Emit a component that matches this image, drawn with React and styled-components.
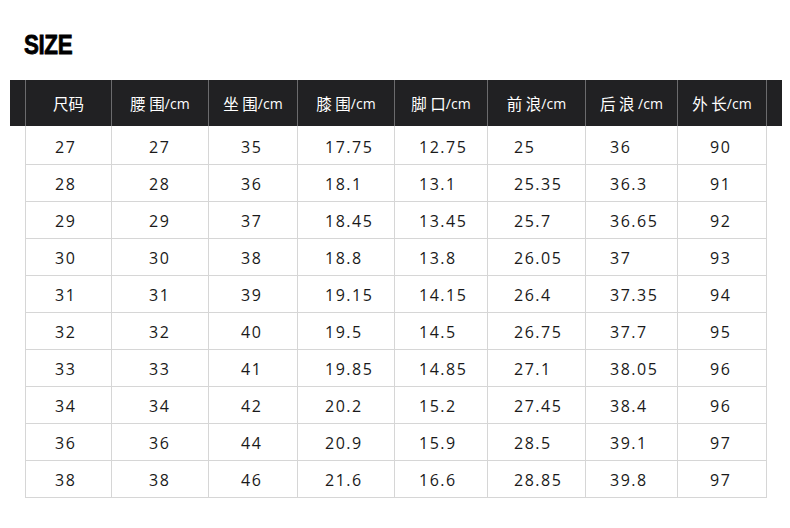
import styled, { createGlobalStyle } from "styled-components"

const GlobalStyle = createGlobalStyle`
  html, body {
    margin: 0;
    padding: 0;
    background: #ffffff;
  }
`

const COLS = "86px 97px 89px 97px 93px 98px 92px 89px"
const PADS = [29, 37, 32, 27, 24, 26, 24, 32]

const HEADERS = [
  ["尺码", ""],
  ["腰 围", "/cm"],
  ["坐 围", "/cm"],
  ["膝 围", "/cm"],
  ["脚 口", "/cm"],
  ["前 浪", "/cm"],
  ["后 浪 ", "/cm"],
  ["外 长", "/cm"],
]

const ROWS = [
  ["27", "27", "35", "17.75", "12.75", "25", "36", "90"],
  ["28", "28", "36", "18.1", "13.1", "25.35", "36.3", "91"],
  ["29", "29", "37", "18.45", "13.45", "25.7", "36.65", "92"],
  ["30", "30", "38", "18.8", "13.8", "26.05", "37", "93"],
  ["31", "31", "39", "19.15", "14.15", "26.4", "37.35", "94"],
  ["32", "32", "40", "19.5", "14.5", "26.75", "37.7", "95"],
  ["33", "33", "41", "19.85", "14.85", "27.1", "38.05", "96"],
  ["34", "34", "42", "20.2", "15.2", "27.45", "38.4", "96"],
  ["36", "36", "44", "20.9", "15.9", "28.5", "39.1", "97"],
  ["38", "38", "46", "21.6", "16.6", "28.85", "39.8", "97"],
]

const Page = styled.div`
  width: 790px;
  height: 528px;
  padding-top: 31px;
  box-sizing: border-box;
  overflow: hidden;
`

const Title = styled.h2`
  margin: 0 0 21px 24px;
  height: 28px;
  font-family: "Liberation Sans", Arial, sans-serif;
  font-weight: 700;
  font-size: 28px;
  line-height: 28px;
  letter-spacing: -0.5px;
  color: #000;
  -webkit-text-stroke: 0.8px #000;
  transform: scaleX(0.8);
  transform-origin: left center;
`

const Table = styled.div`
  margin-left: 10px;
  width: 772px;
`

const HeadRow = styled.div`
  display: grid;
  grid-template-columns: 15px ${COLS} 16px;
  height: 46px;
  background: #212123;
`

const HeadCell = styled.div`
  display: flex;
  align-items: center;
  justify-content: center;
  border-left: ${(p) => (p.$edge ? "none" : "1px solid #6b6b6d")};
  color: #fff;
  font-family: "Noto Sans CJK SC", "Open Sans", sans-serif;
  font-size: 15.5px;
  white-space: pre;
`

const Unit = styled.span`
  font-family: "Open Sans", sans-serif;
  font-size: 14px;
`

const Body = styled.div`
  margin-left: 15px;
  width: 742px;
  border-right: 1px solid #d6d6d6;
  box-sizing: border-box;
`

const Row = styled.div`
  display: grid;
  grid-template-columns: ${COLS};
  height: ${(p) => (p.$first ? "38px" : "36px")};
  border-bottom: 1px solid #d6d6d6;
`

const Cell = styled.div`
  display: flex;
  align-items: center;
  padding-left: ${(p) => p.$pad}px;
  padding-top: ${(p) => (p.$first ? "4px" : "2px")};
  border-left: 1px solid #d6d6d6;
  color: #1a1a1a;
  font-family: "Open Sans", sans-serif;
  font-size: 16px;
  letter-spacing: 1.5px;
`

const App = () => {
  return (
    <Page>
      <GlobalStyle />
      <Title>SIZE</Title>
      <Table>
        <HeadRow>
          <HeadCell $edge />
          {HEADERS.map(([label, unit]) => (
            <HeadCell key={label}>
              {label}
              {unit && <Unit>{unit}</Unit>}
            </HeadCell>
          ))}
          <HeadCell />
        </HeadRow>
        <Body>
          {ROWS.map((row, r) => (
            <Row key={r} $first={r === 0}>
              {row.map((value, c) => (
                <Cell key={c} $pad={PADS[c]} $first={r === 0}>
                  {value}
                </Cell>
              ))}
            </Row>
          ))}
        </Body>
      </Table>
    </Page>
  )
}

export default App
